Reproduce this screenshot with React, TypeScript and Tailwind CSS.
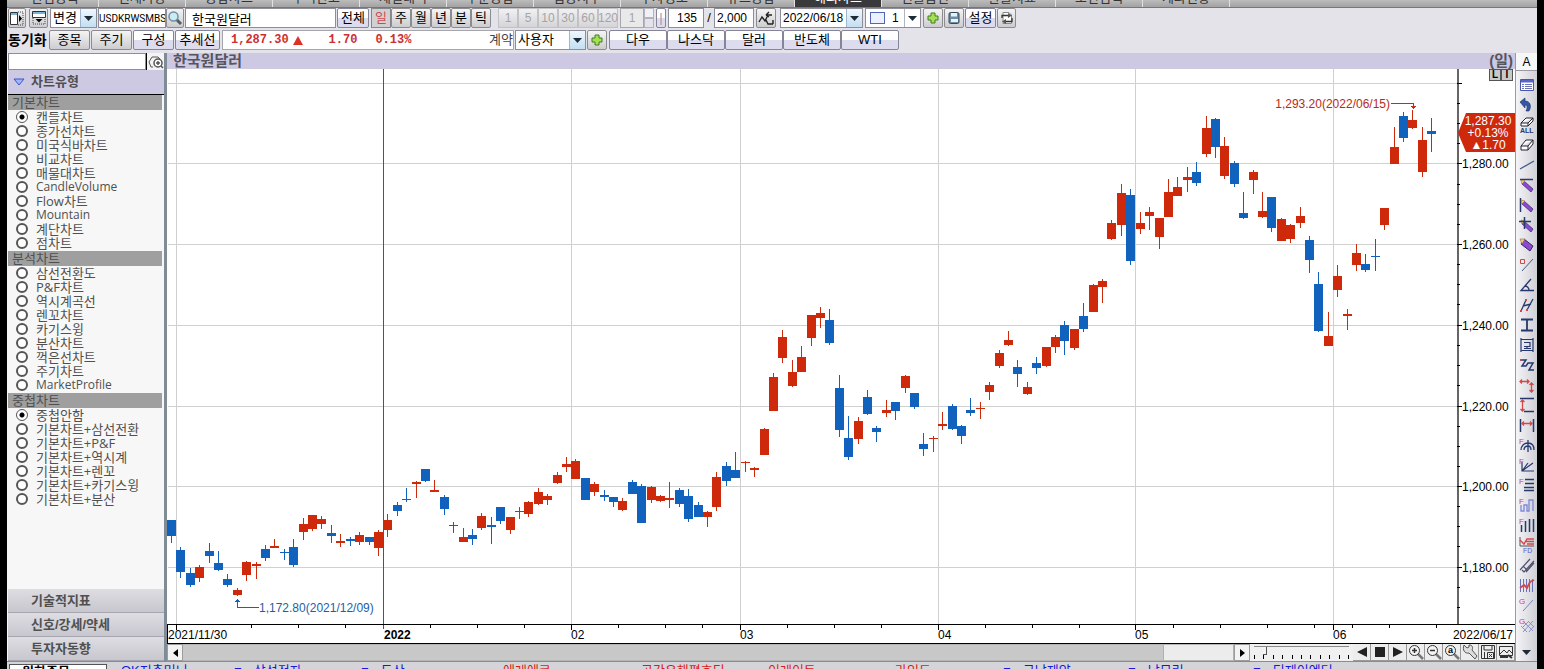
import { useState, type ReactNode } from 'react';
import clsx from 'clsx';

type Candle = ['R' | 'B', number, number, number, number];

// colour, body top, body bottom, high, low (plot units)
const CANDLES: Candle[] = [
  ['B', 451, 467, 451, 474], ['B', 481, 503, 478, 509], ['B', 504, 516, 499, 518], ['R', 498, 509, 496, 513],
  ['B', 482, 487, 474, 494], ['B', 494, 501, 482, 502], ['B', 510, 516, 505, 518], ['R', 521, 526, 519, 527],
  ['R', 493, 506, 492, 512], ['R', 495, 497, 493, 510], ['B', 480, 489, 476, 492], ['R', 477, 479, 470, 479],
  ['B', 483, 484, 480, 491], ['B', 478, 496, 470, 498], ['R', 455, 463, 449, 471], ['R', 446, 460, 446, 462],
  ['R', 450, 455, 447, 460], ['B', 464, 467, 456, 474], ['R', 472, 474, 465, 478], ['B', 470, 472, 468, 477],
  ['R', 466, 473, 463, 476], ['B', 468, 473, 468, 476], ['R', 463, 479, 461, 487], ['R', 451, 461, 445, 468],
  ['B', 436, 442, 433, 447], ['B', 430, 431, 419, 433], ['R', 413, 415, 412, 429], ['B', 400, 412, 400, 413],
  ['R', 421, 423, 411, 423], ['B', 428, 440, 426, 446], ['B', 456, 457, 453, 464], ['R', 468, 473, 459, 473],
  ['B', 466, 470, 460, 476], ['R', 447, 459, 444, 461], ['B', 456, 458, 448, 475], ['B', 438, 452, 438, 455],
  ['R', 448, 461, 448, 465], ['R', 442, 443, 438, 450], ['R', 433, 445, 432, 448], ['R', 423, 435, 419, 436],
  ['R', 427, 431, 425, 436], ['R', 406, 414, 403, 415], ['R', 395, 398, 388, 403], ['R', 392, 410, 390, 410],
  ['B', 409, 431, 409, 431], ['R', 415, 423, 413, 427], ['B', 426, 428, 421, 432], ['B', 428, 433, 428, 438],
  ['R', 432, 441, 429, 442], ['B', 413, 425, 411, 425], ['B', 417, 454, 415, 454], ['R', 418, 431, 417, 434],
  ['R', 427, 432, 426, 433], ['R', 429, 431, 413, 439], ['B', 421, 435, 419, 438], ['B', 427, 450, 420, 453],
  ['B', 436, 448, 433, 448], ['R', 443, 448, 442, 458], ['R', 408, 438, 403, 442], ['B', 397, 412, 393, 417],
  ['B', 401, 409, 383, 409], ['R', 393, 394, 392, 403], ['R', 399, 401, 398, 408], ['R', 360, 386, 359, 386],
  ['R', 308, 342, 304, 342], ['R', 268, 289, 261, 294], ['R', 303, 317, 291, 318], ['R', 288, 303, 277, 303],
  ['R', 246, 269, 246, 277], ['R', 244, 249, 238, 259], ['B', 251, 274, 240, 276], ['B', 319, 361, 306, 368],
  ['B', 369, 388, 347, 391], ['R', 352, 370, 348, 375], ['B', 328, 345, 321, 346], ['B', 359, 363, 357, 373],
  ['R', 341, 344, 331, 348], ['B', 333, 342, 333, 351], ['R', 307, 319, 306, 324], ['B', 324, 338, 324, 340],
  ['B', 375, 380, 364, 387], ['R', 369, 370, 367, 383], ['R', 355, 357, 343, 361], ['B', 337, 360, 335, 361],
  ['B', 357, 367, 356, 375], ['B', 341, 344, 329, 347], ['R', 339, 340, 333, 350], ['R', 316, 323, 313, 331],
  ['R', 284, 297, 281, 299], ['R', 271, 276, 262, 277], ['B', 298, 305, 291, 318], ['R', 318, 325, 313, 326],
  ['B', 294, 299, 288, 305], ['R', 278, 297, 278, 298], ['R', 268, 278, 266, 284], ['B', 256, 272, 252, 286],
  ['R', 260, 279, 260, 281], ['B', 247, 260, 234, 263], ['R', 216, 243, 215, 243], ['R', 212, 218, 210, 234],
  ['R', 154, 170, 151, 171], ['R', 124, 156, 115, 167], ['B', 126, 192, 120, 196], ['R', 154, 160, 143, 165],
  ['R', 143, 147, 138, 161], ['R', 149, 168, 149, 180], ['R', 123, 148, 110, 148], ['R', 118, 127, 108, 127],
  ['R', 108, 111, 98, 123], ['B', 103, 114, 93, 117], ['R', 59, 85, 47, 88], ['B', 50, 78, 49, 89],
  ['R', 77, 107, 68, 110], ['B', 94, 115, 92, 118], ['B', 144, 149, 123, 150], ['R', 103, 111, 101, 125],
  ['R', 142, 148, 123, 149], ['B', 128, 159, 128, 163], ['R', 150, 172, 149, 172], ['R', 156, 170, 155, 174],
  ['R', 147, 154, 138, 159], ['B', 171, 191, 167, 204], ['B', 215, 262, 203, 263], ['R', 267, 277, 243, 277],
  ['R', 207, 221, 196, 228], ['R', 245, 247, 240, 261], ['R', 184, 196, 175, 202], ['B', 195, 201, 185, 203],
  ['B', 187, 188, 170, 202], ['R', 139, 156, 139, 161], ['R', 78, 95, 58, 95], ['B', 47, 69, 43, 73],
  ['R', 51, 59, 41, 60], ['R', 71, 103, 58, 108], ['B', 62, 65, 49, 83],
];

const PRICES = [
  { y: 94, label: '1,280.00' },
  { y: 175, label: '1,260.00' },
  { y: 256, label: '1,240.00' },
  { y: 337, label: '1,220.00' },
  { y: 417, label: '1,200.00' },
  { y: 498, label: '1,180.00' },
];

const MONTHS = [
  { x: 404, label: '02' },
  { x: 573, label: '03' },
  { x: 771, label: '04' },
  { x: 968, label: '05' },
  { x: 1166, label: '06' },
];

const WEEK_TICKS = [
  84, 131, 178, 263, 310, 357, 451, 498, 535, 620, 667, 714, 818, 865, 912, 1006, 1053, 1100, 1147, 1185, 1222, 1269,
];

const MINOR_TICKS = [34, 54, 74, 115, 135, 155, 195, 215, 235, 276, 296, 316, 357, 377, 397, 437, 457, 477, 518, 538];

const CHART_GROUPS = [
  {
    title: '기본차트',
    name: 'basic',
    items: ['캔들차트', '종가선차트', '미국식바차트', '비교차트', '매물대차트', 'CandleVolume', 'Flow차트', 'Mountain', '계단차트', '점차트'],
  },
  {
    title: '분석차트',
    name: 'basic',
    items: ['삼선전환도', 'P&F차트', '역시계곡선', '렌꼬차트', '카기스윙', '분산차트', '꺽은선차트', '주기차트', 'MarketProfile'],
  },
  {
    title: '중첩차트',
    name: 'overlay',
    items: ['중첩안함', '기본차트+삼선전환', '기본차트+P&F', '기본차트+역시계', '기본차트+렌꼬', '기본차트+카기스윙', '기본차트+분산'],
  },
];

const TABS = ['관심종목', '현재가창', '종합차트', '주식잔고', '체결내역', '주문종합', '업종지수', '투자정보', '뉴스종합', '해외차트', '선물옵션', '환율지표', '조건검색', '계좌현황'];

const TICKER = [
  { text: 'OK저축머니', width: 'w-[113px]', red: false },
  { text: '■ㆍ삼성전자', width: 'w-[127px]', red: false },
  { text: '■ㆍ두산', width: 'w-[130px]', red: false },
  { text: 'ㆍ에레에코', width: 'w-[138px]', red: true },
  { text: 'ㆍ공간유해평흐디', width: 'w-[127px]', red: true },
  { text: 'ㆍ이레이트', width: 'w-[127px]', red: true },
  { text: 'ㆍ라임드', width: 'w-[120px]', red: true },
  { text: '■ㆍ금남제약', width: 'w-[125px]', red: false },
  { text: '■ㆍ남무림', width: 'w-[125px]', red: false },
  { text: '■ㆍ티제이엔터', width: 'w-[125px]', red: false },
];

function Arrow() {
  return (
    <svg viewBox="0 0 9 5" className="w-[9px] h-[5px]" aria-hidden="true">
      <path d="M0 0h9L4.500 5z" fill="#1d2b38" />
    </svg>
  );
}

function Combo({ label, value, className, swatch, plain }: { label: string; value: string; className: string; swatch?: boolean; plain?: boolean }) {
  return (
    <div className={clsx('relative flex h-5 shrink-0 items-center border border-[#8e8e98] bg-white', className)}>
      <select
        aria-label={label}
        className={clsx(
          'h-[18px] w-full appearance-none bg-transparent py-0 leading-[18px] outline-none',
          /\d/.test(value) ? 'text-[12px]' : 'text-[13px]',
          swatch ? 'pl-[26px]' : 'pl-0.5'
        )}
      >
        <option>{value}</option>
      </select>
      {swatch && <span className="pointer-events-none absolute left-1 top-[3px] h-3 w-[15px] border border-[#5266b8] bg-[#edf0ff]" />}
      <span
        className={clsx(
          'pointer-events-none absolute inset-y-0 right-0 flex w-4 items-center justify-center border-l',
          plain ? 'border-[#b5b5bd] bg-white' : 'border-[#9fb6cc] bg-gradient-to-b from-[#eef7fd] to-[#c3dff2]'
        )}
      >
        <Arrow />
      </span>
    </div>
  );
}

function Btn({ children, className, tone = 'lilac', label }: { children?: ReactNode; className: string; tone?: 'lilac' | 'gray' | 'off' | 'on'; label?: string }) {
  return (
    <button
      type="button"
      aria-label={label}
      disabled={tone === 'off'}
      className={clsx(
        'flex h-5 shrink-0 items-center justify-center whitespace-nowrap border leading-4',
        tone === 'off' ? 'text-[12px]' : 'text-[13px]',
        tone === 'lilac' && 'rounded-[2px] border-[#85859a] bg-gradient-to-b from-white from-50% to-[#dddcee] to-50%',
        tone === 'gray' && 'rounded-[2px] border-[#8c8c90] bg-gradient-to-b from-[#f4f4f4] to-[#cdcdd0]',
        tone === 'off' && 'border-[#c2c2c6] bg-gradient-to-b from-[#f1f1f3] to-[#d5d5d8] text-[#a4a4a8]',
        tone === 'on' && 'border-[#85858c] bg-[#d3d0d2] text-[#cf4a4c]',
        className
      )}
    >
      {children}
    </button>
  );
}

function PlusIcon() {
  return (
    <svg viewBox="0 0 12 12" className="size-3" aria-hidden="true">
      <path d="M4 1h4v3h3v4H8v3H4V8H1V4h3z" fill="#a5e052" stroke="#3f7d22" />
    </svg>
  );
}

function Toolbar() {
  return (
    <div className="flex flex-col gap-0.5 bg-[#e4e3ea] pb-[3px] pl-px">
      <div className="flex h-5 items-center">
        <Btn tone="gray" label="왼쪽 패널" className="w-[18px]">
          <svg viewBox="0 0 16 16" className="size-4" aria-hidden="true">
            <path d="M1.500 2.500h7v12h-7z" fill="#fff" stroke="#333" />
            <path d="M2 3h6v2H2z" fill="#76b7d6" />
            <path d="M9 2h5v13H9" fill="none" stroke="#444" strokeDasharray="1 1" />
            <path d="M10 5v7l3-3.500z" />
          </svg>
        </Btn>
        <Btn tone="gray" label="위쪽 패널" className="ml-[3px] w-[19px]">
          <svg viewBox="0 0 16 16" className="size-4" aria-hidden="true">
            <path d="M1.500 1.500h13v6h-13z" fill="#fff" stroke="#333" />
            <path d="M2 2h12v2H2z" fill="#76b7d6" />
            <path d="M2 8v6h12V8" fill="none" stroke="#444" strokeDasharray="1 1" />
            <path d="M4.500 9h7L8 12.500z" />
          </svg>
        </Btn>
        <Combo label="변경" value="변경" className="ml-0.5 w-[47px]" />
        <input
          aria-label="종목코드"
          defaultValue="USDKRWSMBS"
          className="ml-px h-5 w-[68px] border border-[#8e8e98] bg-white p-0 font-[Roboto,sans-serif] text-[10px] outline-none"
        />
        <Btn tone="gray" label="검색" className="w-[18px]">
          <svg viewBox="0 0 16 16" className="size-4" aria-hidden="true">
            <path d="m9 9 5 5" stroke="#555d66" strokeWidth="3" />
            <circle cx="6.500" cy="6.500" r="4.500" fill="#c9ecf5" stroke="#6f8fa0" strokeWidth="1.500" />
          </svg>
        </Btn>
        <input aria-label="종목명" defaultValue="한국원달러" className="ml-px h-5 w-[151px] border border-[#8e8e98] bg-white pl-1.5 text-[13px] outline-none" />
        <Btn className="ml-px w-8">전체</Btn>
        <div className="ml-0.5 flex">
          <Btn tone="on" className="w-5">일</Btn>
          {['주', '월', '년', '분', '틱'].map((t) => (
            <Btn key={t} tone="gray" className="w-5">{t}</Btn>
          ))}
        </div>
        <div className="ml-[7px] flex">
          {['1', '5', '10', '30', '60', '120'].map((t) => (
            <Btn key={t} tone="off" className="w-5">{t}</Btn>
          ))}
        </div>
        <input aria-label="주기" disabled defaultValue="1" className="ml-0.5 h-5 w-6 border border-[#a8a8ac] bg-[#e9e9ea] text-center text-[12px] text-[#a4a4a8]" />
        <div className="flex w-2.5 flex-col">
          <button type="button" aria-label="증가" className="h-2.5 border border-[#b3b3c0] bg-[#f1f1f5]" />
          <button type="button" aria-label="감소" className="h-2.5 border border-[#b3b3c0] bg-[#e3e3ee]" />
        </div>
        <Btn label="구분" className="ml-0.5 w-2.5 text-[#9a9ab0]">|</Btn>
        <input aria-label="봉 개수" defaultValue="135" className="ml-0.5 h-5 w-9 border border-[#8e8e98] bg-white pr-1.5 text-right text-[12px] outline-none" />
        <span className="w-2.5 text-center text-[13px]">/</span>
        <input aria-label="전체 봉 개수" defaultValue="2,000" className="h-5 w-10 border border-[#8e8e98] bg-white pr-1.5 text-right text-[12px] outline-none" />
        <Btn tone="gray" label="비교" className="ml-0.5 w-5">
          <svg viewBox="0 0 16 16" className="size-4" fill="none" stroke="#222" aria-hidden="true">
            <path d="m1 12 3-5 3 4 3-6M8 5h6M8 5l3-3M8 5l3 2M8 10l2 4h5M15 10v4" strokeWidth="1.400" />
          </svg>
        </Btn>
        <Combo label="날짜" value="2022/06/18" className="ml-1 w-[83px]" />
        <Combo label="선 굵기" value="1" swatch plain className="ml-0.5 w-14" />
        <Btn tone="gray" label="추가" className="ml-0.5 w-5"><PlusIcon /></Btn>
        <Btn tone="gray" label="저장" className="ml-px w-5">
          <svg viewBox="0 0 14 14" className="size-3.5" aria-hidden="true">
            <rect x="2" y="1.500" width="10" height="11" rx="1.500" fill="#6f8ca5" stroke="#34495c" />
            <path d="M4 2h6v3.500H4zM4 8h7v3H4z" fill="#e5f2fa" />
          </svg>
        </Btn>
        <Btn className="ml-px w-[31px]">설정</Btn>
        <Btn tone="gray" label="새로고침" className="ml-px w-[19px]">
          <svg viewBox="0 0 14 14" className="size-3.5" aria-hidden="true">
            <path d="M3 1.500h6l2.500 2.500v8.500H3z" fill="#fff" stroke="#888" />
            <path d="M2 7V4.500h7M12 7v3.500H5" fill="none" stroke="#333" strokeWidth="1.300" />
            <path d="M8 2l4 2.500L8 7zM6 8l-4 2.500L6 13z" fill="#555" />
          </svg>
        </Btn>
      </div>

      <div className="flex h-5 items-center">
        <span className="w-[41px] shrink-0 whitespace-nowrap text-[14px] font-bold">동기화</span>
        <Btn tone="gray" className="w-[41px]">종목</Btn>
        <Btn tone="gray" className="ml-px w-[41px]">주기</Btn>
        <Btn className="ml-px w-[41px]">구성</Btn>
        <Btn className="ml-px w-[45px]">추세선</Btn>
        <div className="ml-0.5 flex h-5 w-[292px] shrink-0 items-center border border-[#a5a5ad] bg-white pl-2 font-['Liberation_Mono','Noto_Sans_CJK_KR',monospace] text-[12px] font-bold text-[#cc2f30]">
          <span>1,287.30</span>
          <svg viewBox="0 0 10 9" className="ml-1 h-[9px] w-2.5" aria-hidden="true">
            <path d="M5 0l5 9H0z" fill="#dd3327" />
          </svg>
          <span className="ml-[26px]">1.70</span>
          <span className="ml-[18px]">0.13%</span>
          <span className="ml-auto font-['Liberation_Sans','Noto_Sans_CJK_KR',sans-serif] text-[13px] font-normal leading-[18px] text-[#444]">계약</span>
        </div>
        <Combo label="계약" value="사용자" className="ml-px w-[71px]" />
        <Btn tone="gray" label="종목 추가" className="ml-px w-5"><PlusIcon /></Btn>
        <div className="ml-0.5 flex">
          {['다우', '나스닥', '달러', '반도체', 'WTI'].map((t) => (
            <Btn key={t} className="w-[58px]">{t}</Btn>
          ))}
        </div>
      </div>
    </div>
  );
}

function Sidebar() {
  const [picked, setPicked] = useState<Record<string, string>>({ basic: '캔들차트', overlay: '중첩안함' });

  return (
    <aside className="flex w-[157px] shrink-0 flex-col bg-[#f7f7f7] pl-px text-[#505050]">
      <div className="flex h-[17px] bg-white">
        <input aria-label="차트 검색" className="w-0 flex-1 border border-[#8e8e98] bg-white outline-none" />
        <button type="button" aria-label="검색" className="flex w-[18px] items-center justify-center border-l border-black bg-[#f4f4f4]">
          <svg viewBox="0 0 16 14" className="h-3.5 w-4" fill="none" stroke="#555" aria-hidden="true">
            <path d="M5 12H3L1 7l3-5h6l2 2" />
            <circle cx="10" cy="8" r="4" fill="#fff" strokeWidth="1.500" />
            <path d="M10 6v4M8 8h4M13 11l2 2" strokeWidth="1.500" />
          </svg>
        </button>
      </div>
      <button type="button" className="flex h-[25px] items-center gap-1.5 border-b border-black bg-[#cdc9e3] pl-[5px] text-[13px] font-bold">
        <svg viewBox="0 0 12 8" className="h-2 w-3" aria-hidden="true">
          <path d="M1 1h10L6 7z" fill="#9fb6ff" stroke="#3854c8" />
        </svg>
        차트유형
      </button>
      <div className="flex-1 pr-0.5">
        {CHART_GROUPS.map((g) => (
          <fieldset key={g.title} className="pb-px">
            <legend className="h-[15px] w-full bg-[#9f9f9f] pl-1 text-[13px] leading-[15px]">{g.title}</legend>
            {g.items.map((item) => (
              <label
                key={item}
                className={clsx(
                  "flex h-3.5 items-center gap-2 whitespace-nowrap pl-2 font-['Open_Sans','Noto_Sans_CJK_KR',sans-serif] leading-[14px]",
                  /^\w+$/.test(item) ? 'text-[12px]' : 'text-[13px]'
                )}
              >
                <input
                  type="radio"
                  name={g.name}
                  checked={picked[g.name] === item}
                  onChange={() => setPicked({ ...picked, [g.name]: item })}
                  className="size-3 shrink-0 appearance-none rounded-full border-2 border-[#555] bg-white checked:border checked:bg-[radial-gradient(circle,#000_2px,#fff_3px)]"
                />
                <span>{item}</span>
              </label>
            ))}
          </fieldset>
        ))}
      </div>
      {['기술적지표', '신호/강세/약세', '투자자동향'].map((t) => (
        <button key={t} type="button" className="h-6 border-b border-[#a5a5b2] bg-gradient-to-b from-[#dedde2] to-[#c8c7ce] pl-[23px] text-left text-[13px] font-bold leading-5">
          {t}
        </button>
      ))}
    </aside>
  );
}

function Chart() {
  return (
    <svg viewBox="0 0 1348 575" className="block h-full w-full bg-white text-[12px]" role="img" aria-label="한국원달러 일봉 차트">
      <g stroke="#cfd0d0" shapeRendering="crispEdges">
        {[14, ...PRICES.map((p) => p.y)].map((y) => (
          <path key={y} d={`M1 ${y}.5H1290`} />
        ))}
        {[9, ...MONTHS.map((m) => m.x)].map((x) => (
          <path key={x} d={`M${x}.5 0V555`} />
        ))}
      </g>
      <rect x="216" y="0" width="1" height="560" fill="#cf1f20" shapeRendering="crispEdges" />

      <g shapeRendering="crispEdges">
        {CANDLES.map(([side, top, bottom, high, low], i) => {
          const x = Math.round(4 + i * 9.405);
          return (
            <g key={i} fill={side === 'R' ? '#cf290c' : '#1062bd'}>
              <rect x={x} y={high} width="1" height={low - high} />
              <rect x={x - 4} y={top} width="9" height={bottom - top} />
            </g>
          );
        })}
      </g>

      <g fill="#1062bd" shapeRendering="crispEdges">
        <rect x="70" y="530" width="1" height="9" />
        <rect x="70" y="538" width="22" height="1" />
        <rect x="69" y="531" width="3" height="1" />
        <rect x="68" y="532" width="5" height="1" />
      </g>
      <text x="92" y="543" fill="#1d5ea8">1,172.80(2021/12/09)</text>
      <g fill="#cf290c" shapeRendering="crispEdges">
        <rect x="1224" y="34" width="23" height="1" />
        <rect x="1246" y="34" width="1" height="6" />
        <rect x="1244" y="37" width="5" height="1" />
        <rect x="1245" y="38" width="3" height="1" />
      </g>
      <text x="1223" y="39" textAnchor="end" fill="#b82a18">1,293.20(2022/06/15)</text>

      <g stroke="#000" shapeRendering="crispEdges">
        <path d="M1290.500 0V555" stroke="#666" strokeWidth="2" />
        {[14, ...PRICES.map((p) => p.y)].map((y) => (
          <path key={y} d={`M1290 ${y}.5h5`} />
        ))}
        {MINOR_TICKS.map((y) => (
          <path key={y} d={`M1290 ${y}.5h3`} />
        ))}
        <path d="M0.500 555.500H1348M0.500 574.500H1348M0.500 555V575" fill="none" />
        {WEEK_TICKS.map((x) => (
          <path key={x} d={`M${x}.5 556v3`} />
        ))}
        {[9, ...MONTHS.map((m) => m.x)].map((x) => (
          <path key={x} d={`M${x}.5 556v5`} />
        ))}
      </g>
      {PRICES.map((p) => (
        <text key={p.label} x="1295" y={p.y + 5}>{p.label}</text>
      ))}
      <text x="1" y="570">2021/11/30</text>
      <text x="217" y="570" fontWeight="bold">2022</text>
      {MONTHS.map((m) => (
        <text key={m.label} x={m.x} y="570">{m.label}</text>
      ))}
      <text x="1346" y="570" textAnchor="end">2022/06/17</text>

      <path d="M1291 64l8-20h49v39h-49z" fill="#cf290c" />
      <g fill="#fff" textAnchor="middle">
        <text x="1321" y="56">1,287.30</text>
        <text x="1321" y="68">+0.13%</text>
        <text x="1321" y="80">▲1.70</text>
      </g>
    </svg>
  );
}

const NAVY = '#26386e';
const RED = '#d34848';

function Pencil() {
  return (
    <>
      <path d="m5 4 9 8-2 3-9-8z" fill="#8a4ccf" stroke="#40206e" strokeWidth=".7" />
      <path d="M2 3l4 1-3 3z" fill="#f5cf7a" stroke="#7a5a1a" strokeWidth=".5" />
    </>
  );
}

function Mark({ c }: { c: string }) {
  return <text x="0" y="7" fontSize="8" fill={RED} stroke="none">{c}</text>;
}

const TOOLS: { name: string; icon: ReactNode }[] = [
  {
    name: '목록',
    icon: (
      <>
        <path d="M1.500 2.500h13v11h-13z" fill="#fff" stroke="#4a55ac" />
        <path d="M2 3h12v2.500H2z" fill="#5864c6" stroke="none" />
        <path d="M3 7.500h2M6 7.500h7M3 9.500h2M6 9.500h7M3 11.500h2M6 11.500h7" stroke="#6a74bd" />
      </>
    ),
  },
  { name: '되돌리기', icon: <path d="M1 5l5-4v3c5 0 7 5 4 10H7c2-4 1-6-1-6v3z" fill="#3556a5" stroke="#1d3063" strokeWidth=".6" /> },
  {
    name: '모두 지우기',
    icon: (
      <>
        <path d="M2 6l5-5h7l-5 5zM2 6v3h7l5-5V1M9 6v3" fill="#fff" stroke="#223" />
        <text x="1" y="16" fontSize="7" fontWeight="bold" fill="#26386e" stroke="none">ALL</text>
      </>
    ),
  },
  { name: '지우기', icon: <path d="M2 9l5-6h7l-5 6zM2 9v4h7l5-6V3M9 9v4" fill="#fff" stroke="#223" /> },
  { name: '추세선', icon: <path d="M1 12 15 4" stroke="#445a88" strokeWidth="1.300" /> },
  { name: '수평선', icon: <><path d="M1 2.500h13" strokeWidth="1.500" /><Pencil /></> },
  { name: '수직선', icon: <><path d="M1.500 1v14" strokeWidth="1.500" /><Pencil /></> },
  { name: '십자선', icon: <><Pencil /><path d="M5.500 0v12M0 4.500h12" strokeWidth="1.500" /></> },
  {
    name: '자유선',
    icon: (
      <>
        <path d="m5 2 9 7-3 5-9-7z" fill="#8a4ccf" stroke="#40206e" />
        <path d="M1 2l5 0-3 5z" fill="#f5cf7a" stroke="#7a5a1a" strokeWidth=".5" />
      </>
    ),
  },
  { name: '기준선', icon: <><path d="M3 14 14 2" stroke="#445a88" /><path d="M1.500 2.500h4v4h-4z" stroke={RED} /></> },
  { name: '각도선', icon: <path d="M12 2 2 13.500h13M6 9c2 0 4 2 4 4" strokeWidth="1.300" /> },
  { name: '평행선', icon: <><path d="M2 14 7 3M8 13l6-11M4 9l8-2" strokeWidth="1.300" /><path d="M6 2h2v2H6zM1 13h2v2H1zM7 12h2v2H7z" fill={RED} stroke="none" /></> },
  { name: '구간', icon: <path d="M2 2.500h12M2 13.500h12M8 3v10" strokeWidth="1.800" /> },
  { name: '사각형', icon: <path d="M2 1v14M14 1v14M2 2.500h12M2 13.500h12M5 5.500h6v4H5M8 9v2M5 11.500h7" strokeWidth="1.200" /> },
  { name: '지그재그', icon: <><path d="M2 3h5L3 9h4l2-3h5l-4 7h5" strokeWidth="1.500" /><path d="M1 2h2v2H1z" fill={RED} stroke="none" /></> },
  { name: '변동폭', icon: <path d="M1 4.500h9M3 2.500 1 4.500l2 2M8 2.500l2 2-2 2M12.500 6v9M10.500 8l2-2 2 2M10.500 13l2 2 2-2" stroke={RED} strokeWidth="1.300" /> },
  { name: '가격폭', icon: <><path d="M1 1.500h14M5 14.500h10" strokeWidth="1.500" /><path d="M3.500 3v11M1.500 5l2-2 2 2M1.500 12l2 2 2-2" stroke={RED} strokeWidth="1.300" /></> },
  { name: '기간폭', icon: <><path d="M1.500 2v13M14.500 2v13" strokeWidth="1.500" /><path d="M3 6.500h10M5 4.500l-2 2 2 2M11 4.500l2 2-2 2" stroke={RED} strokeWidth="1.300" /></> },
  { name: '피보나치 아크', icon: <><path d="M2 13c0-4 3-7 7-7s6 3 6 7M5 13c0-3 2-4 4-4s3 1 3 4M9 3v12" strokeWidth="1.300" /><Mark c="F" /></> },
  { name: '피보나치 팬', icon: <><path d="M3 5v9h12M3 14l11-8M3 14l6-8" strokeWidth="1.200" /><Mark c="F" /></> },
  { name: '피보나치 조정', icon: <><path d="M6 2.500h9M6 6.500h9M5 10.500h10M5 13.500h10" strokeWidth="1.500" /><Mark c="F" /></> },
  { name: '피보나치 목표', icon: <><path d="M2 8v6h3V8h3v6h2V3h4v11" stroke="#7e86d8" strokeWidth="1.300" /><Mark c="F" /></> },
  { name: '피보나치 시간대', icon: <><path d="M2.500 8v7M6.500 4v11M10.500 2v13M14.500 2v13" strokeWidth="1.500" /><Mark c="F" /></> },
  {
    name: 'FD',
    icon: (
      <>
        <path d="M1 0v9h14" stroke="#555" />
        <path d="m1 3 4 4 3-5h7M7 4.500h8M8 7h7" stroke={RED} strokeWidth="1.400" />
        <text x="4" y="16" fontSize="7" fill="#5861c7" stroke="none">FD</text>
      </>
    ),
  },
  { name: '피치포크', icon: <path d="M1 13 11 2M7 15l8-9M4 9l4 4M3 13l2 2L15 4" stroke="#4c506c" strokeWidth="1.200" /> },
  { name: '회귀선', icon: <><path d="M1.500 2v13M4.500 2v13M7.500 2v13M10.500 2v13M13.500 2v13" stroke="#6670c2" /><path d="m1 11 4-3 3 3 3-6 4-2" stroke={RED} strokeWidth="1.800" /></> },
  { name: '갠 라인', icon: <><path d="M4 14 14 3" stroke="#7883c5" /><Mark c="G" /></> },
  { name: '갠 그리드', icon: <><path d="m5 5 9 9M9 4l6 6M2 9l6 6M14 4 4 15M15 9l-5 6M10 4 3 11" stroke="#8991cf" /><Mark c="G" /></> },
];

function ToolStrip() {
  return (
    <aside className="flex w-[22px] shrink-0 flex-col items-center border-l border-[#9a9aa2] bg-gradient-to-r from-[#f5f5f8] to-[#cfcfd6]">
      <button type="button" className="mb-1 h-[18px] w-full border-b border-[#9a9aa2] bg-[#f7f7f9] text-[12px] leading-4">A</button>
      {TOOLS.map((t) => (
        <button key={t.name} type="button" aria-label={t.name} className="flex h-5 w-full shrink-0 items-center justify-center">
          <svg viewBox="0 0 16 16" className="size-4" fill="none" stroke={NAVY} aria-hidden="true">{t.icon}</svg>
        </button>
      ))}
      <button type="button" aria-label="더보기" className="mt-auto flex h-[17px] w-full items-center justify-center">
        <Arrow />
      </button>
    </aside>
  );
}

function Lens({ mark }: { mark: ReactNode }) {
  return (
    <svg viewBox="0 0 16 16" className="size-4" fill="none" stroke="#333" aria-hidden="true">
      <path d="m10 10 5 5" strokeWidth="2.500" stroke="#777" />
      <circle cx="6.500" cy="6.500" r="5" fill="#f4f4f4" />
      {mark}
    </svg>
  );
}

const CONTROLS: { name: string; icon: ReactNode }[] = [
  { name: '뒤로', icon: <svg viewBox="0 0 16 16" className="size-4"><path d="M13 3v10L3 8z" fill="#222" /></svg> },
  { name: '정지', icon: <svg viewBox="0 0 16 16" className="size-4"><path d="M3 3h10v10H3z" fill="#222" /></svg> },
  { name: '재생', icon: <svg viewBox="0 0 16 16" className="size-4"><path d="M3 3v10l10-5z" fill="#222" /></svg> },
  { name: '확대', icon: <Lens mark={<path d="M4 6.500h5M6.500 4v5" strokeWidth="1.500" />} /> },
  { name: '축소', icon: <Lens mark={<path d="M4 6.500h5" strokeWidth="1.500" />} /> },
  { name: '전체보기', icon: <Lens mark={<text x="4" y="9" fontSize="9" fontWeight="bold" fill="#000" stroke="none">a</text>} /> },
  {
    name: '도구',
    icon: (
      <svg viewBox="0 0 16 16" className="size-4">
        <path d="M2 1l3 3 2-1V1c4 0 4 3 3 5l5 6-2 3-6-6C3 10 0 6 2 1z" fill="#ddd" stroke="#555" />
      </svg>
    ),
  },
  {
    name: '저장',
    icon: (
      <svg viewBox="0 0 16 16" className="size-4" fill="none" stroke="#333">
        <path d="M1.500 1.500h13v13h-13zM4 2v4h8V2M4.500 14V8M7.500 8.500h6v6h-6zM9 10l3 3M12 10l-3 3" />
      </svg>
    ),
  },
  {
    name: '인쇄',
    icon: (
      <svg viewBox="0 0 16 16" className="size-4" fill="none" stroke="#333">
        <path d="M1.500 2.500h13v9h-13zM2 10l4-4 3 3 2-3 3 3" />
        <path d="M2 13h8M10 11l4 3" strokeWidth="2" />
      </svg>
    ),
  },
];

function ScrollRow() {
  return (
    <div className="flex h-[17px] shrink-0 bg-[#f0f0f0]">
      <button type="button" aria-label="왼쪽으로" className="flex w-4 shrink-0 items-center justify-center border border-[#9c9c9c] bg-[#f3f3f3]">
        <svg viewBox="0 0 5 8" className="h-2 w-[5px]" aria-hidden="true"><path d="M5 0v8L0 4z" /></svg>
      </button>
      <div className="flex flex-1 justify-end border-y border-[#b5b5b5] bg-[#c8c8c8]">
        <div className="w-[71px] border-x border-[#b0b0b0] bg-[#ececec]" />
      </div>
      <button type="button" aria-label="오른쪽으로" className="flex w-4 shrink-0 items-center justify-center border border-[#9c9c9c] bg-[#f3f3f3]">
        <svg viewBox="0 0 5 8" className="h-2 w-[5px]" aria-hidden="true"><path d="M0 0v8l5-4z" /></svg>
      </button>
      <div className="flex w-[103px] shrink-0 flex-col justify-between px-1 pb-0.5 pt-0.5">
        <input
          type="range"
          aria-label="재생 속도"
          min="0"
          max="10"
          defaultValue="1"
          className="h-2 w-full appearance-none border-t border-[#8a8a8a] bg-transparent [&::-webkit-slider-thumb]:h-2 [&::-webkit-slider-thumb]:w-1 [&::-webkit-slider-thumb]:appearance-none [&::-webkit-slider-thumb]:border-b [&::-webkit-slider-thumb]:border-r [&::-webkit-slider-thumb]:border-[#555] [&::-webkit-slider-thumb]:bg-[#f4f4f4]"
        />
        <div className="flex justify-between">
          {Array.from({ length: 11 }, (_, i) => (
            <span key={i} className="h-1 w-px bg-black" />
          ))}
        </div>
      </div>
      {CONTROLS.map((c) => (
        <button key={c.name} type="button" aria-label={c.name} className="flex w-[18px] shrink-0 items-center justify-center border-b border-r border-[#999] bg-[#ededed]">
          {c.icon}
        </button>
      ))}
    </div>
  );
}

export default function App() {
  return (
    <div className="flex h-screen min-h-[660px] flex-col overflow-hidden border-l-[7px] border-r-[7px] border-black bg-[#e4e3ea] font-['Liberation_Sans','Noto_Sans_CJK_KR',sans-serif] text-black">
      <nav className="flex h-2 shrink-0 items-end overflow-hidden border-b border-[#77777d] bg-gradient-to-b from-[#bcbcbc] to-[#a2a2a2] pl-[5px]">
        {TABS.map((t, i) => (
          <a
            key={t}
            href="#"
            className={clsx(
              'flex h-5 w-[87px] shrink-0 items-end justify-center border-r border-[#e2e2e2] pb-[3px] text-[13px] leading-[13px]',
              i === 9 ? 'bg-[#3a3a3c] text-white' : 'text-[#333]'
            )}
          >
            {t}
          </a>
        ))}
      </nav>
      <Toolbar />
      <div className="flex min-h-0 flex-1">
        <Sidebar />
        <main className="flex min-w-0 flex-1 flex-col border-l-[3px] border-[#7f8c98]">
          <header className="flex h-4 shrink-0 items-center justify-between bg-[#cdc9e3] pl-1.5 pr-0.5 text-[15px] font-bold leading-4 text-[#55555f]">
            <h1>한국원달러</h1>
            <span>(일)</span>
          </header>
          <div className="relative min-h-0 flex-1">
            <Chart />
            <div className="absolute right-0.5 top-0 flex">
              {['L', 'I'].map((t) => (
                <button key={t} type="button" className="h-3 w-3 border border-[#555] bg-[#c9c9c9] text-[10px] font-bold leading-[10px]">
                  {t}
                </button>
              ))}
            </div>
          </div>
          <ScrollRow />
        </main>
        <ToolStrip />
      </div>
      <footer className="flex h-2 shrink-0 items-start overflow-hidden border-t border-[#8a8a90] bg-[#d5d5d9] pt-0.5 text-[13px] leading-[14px]">
        <button type="button" className="ml-0.5 h-4 w-[98px] shrink-0 border border-[#555] bg-white pl-3 text-left font-bold leading-[14px]">원화주문</button>
        <div className="ml-3.5 flex">
          {TICKER.map((t) => (
            <a key={t.text} href="#" className={clsx('shrink-0 whitespace-nowrap', t.width, t.red ? 'text-[#e01818]' : 'text-[#1818d8]')}>
              {t.text}
            </a>
          ))}
        </div>
      </footer>
    </div>
  );
}
